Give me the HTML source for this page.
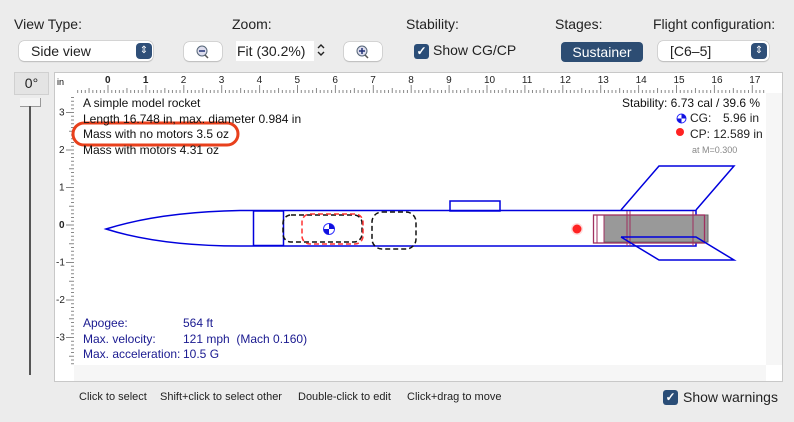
<!DOCTYPE html>
<html><head><meta charset="utf-8"><style>
body{margin:0;width:794px;height:422px;background:#ececec;font-family:"Liberation Sans",sans-serif;position:relative;overflow:hidden;color:#222}
.a{position:absolute;white-space:nowrap}
.lbl{font-size:14px;color:#222}
.btn{position:absolute;background:#fff;border-radius:5px;box-shadow:0 0 0 0.5px #bbb,0 1px 1px #bbb;font-size:14px}
.sel{position:absolute;width:16px;height:16px;background:#2f4f78;border-radius:4px;color:#fff;font-size:10px;text-align:center;line-height:16px}
.chk{position:absolute;width:15px;height:15px;background:#2a4d77;border-radius:3px;color:#fff;font-size:12px;text-align:center;line-height:15px;font-weight:bold}
</style></head><body>
<div class="a lbl" style="left:14px;top:16px">View Type:</div>
<div class="a lbl" style="left:232px;top:16px">Zoom:</div>
<div class="a lbl" style="left:406px;top:16px">Stability:</div>
<div class="a lbl" style="left:555px;top:16px">Stages:</div>
<div class="a lbl" style="left:653px;top:16px">Flight configuration:</div>

<div class="btn" style="left:19px;top:41px;width:134px;height:20px"><span class="a" style="left:12px;top:2px">Side view</span><div class="sel" style="left:117px;top:2px">⇕</div></div>
<div class="btn" style="left:184px;top:42px;width:38px;height:19px"><svg width="38" height="19"><circle cx="18" cy="9" r="5" fill="#dde" stroke="#567" stroke-width="1"/><line x1="15" y1="9" x2="21" y2="9" stroke="#237" stroke-width="1.5"/><line x1="21" y1="13" x2="24" y2="16" stroke="#555" stroke-width="1.5"/></svg></div>
<div class="a" style="left:236px;top:41px;width:78px;height:20px;background:#fff;font-size:14px"><span class="a" style="left:1px;top:2px">Fit (30.2%)</span></div>
<svg class="a" style="left:314px;top:41px" width="14" height="18"><path d="M4,7 L7,4 L10,7 M4,11 L7,14 L10,11" fill="none" stroke="#222" stroke-width="1.4"/></svg>
<div class="btn" style="left:344px;top:42px;width:38px;height:19px"><svg width="38" height="19"><circle cx="18" cy="9" r="5" fill="#dde" stroke="#567" stroke-width="1"/><line x1="15" y1="9" x2="21" y2="9" stroke="#237" stroke-width="1.5"/><line x1="18" y1="6" x2="18" y2="12" stroke="#237" stroke-width="1.5"/><line x1="21" y1="13" x2="24" y2="16" stroke="#555" stroke-width="1.5"/></svg></div>
<div class="chk" style="left:414px;top:44px">✓</div>
<div class="a lbl" style="left:433px;top:42px">Show CG/CP</div>
<div class="a" style="left:561px;top:42px;width:82px;height:20px;background:#2d4d73;border-radius:4px;color:#fff;font-size:14px;text-align:center;line-height:20px">Sustainer</div>
<div class="btn" style="left:658px;top:41px;width:111px;height:20px"><span class="a" style="left:12px;top:2px">[C6–5]</span><div class="sel" style="left:93px;top:2px">⇕</div></div>

<div class="a" style="left:14px;top:72px;width:33px;height:21px;background:#e4e4e4;border:1px solid #d0d0d0;font-size:14px;text-align:center;line-height:21px">0°</div>
<div class="a" style="left:20px;top:98px;width:20px;height:8px;background:#f4f4f4;border:1px solid #999;border-top:none;border-left:none"></div>
<div class="a" style="left:29px;top:106px;width:2px;height:269px;background:#555"></div>

<svg class="a" style="left:54px;top:72px" width="729" height="310">
<rect x="0.5" y="0.5" width="728" height="309" fill="#fff" stroke="#c8c8c8"/>
<rect x="20" y="293" width="692" height="16" fill="#f6f6f6"/>
<rect x="712" y="21" width="16" height="272" fill="#f6f6f6"/>
<text x="3" y="13" font-size="9" font-family="Liberation Sans">in</text>
<g stroke="#888" stroke-width="1" id="ht"></g>
<g font-size="10" font-family="Liberation Sans" fill="#222" id="hl"></g>
<g stroke="#888" stroke-width="1" id="vt"></g>
<g font-size="10" font-family="Liberation Sans" fill="#222" id="vl"></g>
</svg>

<svg class="a" style="left:0;top:0" width="794" height="422">
<path d="M106,229 Q160,212 240,210.5 L696,210.5 L696,246 L240,246 Q160,246 106,229 Z" fill="none" stroke="#0000dd" stroke-width="1.5"/>
<rect x="253.5" y="211" width="30" height="34.5" fill="none" stroke="#0000dd" stroke-width="1.5"/>
<rect x="450" y="201" width="50" height="10" fill="none" stroke="#0000dd" stroke-width="1.5"/>
<rect x="283" y="215" width="79" height="27" rx="8" fill="none" stroke="#111" stroke-width="1.5" stroke-dasharray="5,3"/>
<rect x="302" y="214" width="61" height="30" rx="8" fill="none" stroke="#f33" stroke-width="1.5" stroke-dasharray="5,3"/>
<rect x="372" y="212" width="44" height="37" rx="10" fill="none" stroke="#111" stroke-width="1.5" stroke-dasharray="5,3"/>
<circle cx="329" cy="229" r="5.5" fill="#fff" stroke="#33f"/><path d="M329,229 L329,223.5 A5.5,5.5 0 0 1 334.5,229 Z M329,229 L329,234.5 A5.5,5.5 0 0 1 323.5,229 Z" fill="#11d"/>
<circle cx="577" cy="229" r="6" fill="#fdd"/><circle cx="577" cy="229" r="4.5" fill="#f22"/>
<rect x="604" y="215" width="104" height="27" fill="#999" stroke="#666"/>
<rect x="593.5" y="215" width="111" height="28" fill="none" stroke="#a03060" stroke-width="1.3"/>
<rect x="597" y="215" width="7" height="28" fill="none" stroke="#a03060"/>
<line x1="627" y1="211" x2="627" y2="246" stroke="#a03060"/><line x1="630" y1="211" x2="630" y2="246" stroke="#a03060"/>
<line x1="693" y1="211" x2="693" y2="246" stroke="#a03060"/>
<path d="M621,210 L659,166 L734,166 L696,210" fill="none" stroke="#0000dd" stroke-width="1.5"/>
<path d="M621,237 L696,237 L734,260 L659,260 L621,237" fill="none" stroke="#0000dd" stroke-width="1.5"/>
<rect x="73" y="123" width="165" height="22" rx="11" fill="none" stroke="#e8401c" stroke-width="3"/>
</svg>

<div class="a" style="left:83px;top:96px;font-size:12px;line-height:15.5px;color:#111">A simple model rocket<br>Length 16.748 in, max. diameter 0.984 in<br>Mass with no motors 3.5 oz<br>Mass with motors 4.31 oz</div>
<div class="a" style="left:622px;top:96px;font-size:12px;line-height:15.5px;color:#111">Stability: 6.73 cal / 39.6 %</div>
<div class="a" style="left:676px;top:111px;width:11px;height:11px"><svg width="11" height="11"><circle cx="5.5" cy="5.5" r="4.5" fill="#fff" stroke="#22f"/><path d="M5.5,5.5 L5.5,1 A4.5,4.5 0 0 1 10,5.5Z M5.5,5.5 L5.5,10 A4.5,4.5 0 0 1 1,5.5Z" fill="#11d"/></svg></div>
<div class="a" style="left:690px;top:111px;font-size:12px">CG:</div>
<div class="a" style="left:723px;top:111px;font-size:12px">5.96 in</div>
<div class="a" style="left:676px;top:128px;width:8px;height:8px;border-radius:50%;background:#f22"></div>
<div class="a" style="left:690px;top:127px;font-size:12px">CP: 12.589 in</div>
<div class="a" style="left:692px;top:145px;font-size:9px;color:#888">at M=0.300</div>

<div class="a" style="left:83px;top:316px;font-size:12px;line-height:15.5px;color:#1a1a90">Apogee:<br>Max. velocity:<br>Max. acceleration:</div>
<div class="a" style="left:183px;top:316px;font-size:12px;line-height:15.5px;color:#1a1a90">564 ft<br>121 mph &nbsp;(Mach 0.160)<br>10.5 G</div>

<div class="a" style="left:79px;top:391px;font-size:11px;color:#222">Click to select</div>
<div class="a" style="left:160px;top:391px;font-size:11px;color:#222">Shift+click to select other</div>
<div class="a" style="left:298px;top:391px;font-size:11px;color:#222">Double-click to edit</div>
<div class="a" style="left:407px;top:391px;font-size:11px;color:#222">Click+drag to move</div>
<div class="chk" style="left:663px;top:390px">✓</div>
<div class="a lbl" style="left:683px;top:389px">Show warnings</div>

<script>
var ns="http://www.w3.org/2000/svg";
function el(p,t,a,tx){var e=document.createElementNS(ns,t);for(var k in a)e.setAttribute(k,a[k]);if(tx!==undefined)e.textContent=String(tx);document.getElementById(p).appendChild(e);}
var x0=54,y0=72,ppi=37.9;
for(var i=-40;i<=180;i++){var x=108+i*ppi/10-x0;if(x<22||x>712)continue;var h=i%10==0?8:(i%5==0?5:3);el("ht","line",{x1:x,y1:21,x2:x,y2:21-h});if(i%10==0&&i>=0)el("hl","text",{x:x-3,y:11,"font-weight":i==0||i==10?"bold":"normal"},i/10);}
for(var j=-40;j<=40;j++){var y=225-j*37.5/10-y0;if(y<22||y>292)continue;var w=j%10==0?8:(j%5==0?5:3);el("vt","line",{x1:20,y1:y,x2:20-w,y2:y});if(j%10==0)el("vl","text",{x:j<0?2:5,y:y+3,"font-weight":j==0?"bold":"normal"},j/10);}
</script>
</body></html>
